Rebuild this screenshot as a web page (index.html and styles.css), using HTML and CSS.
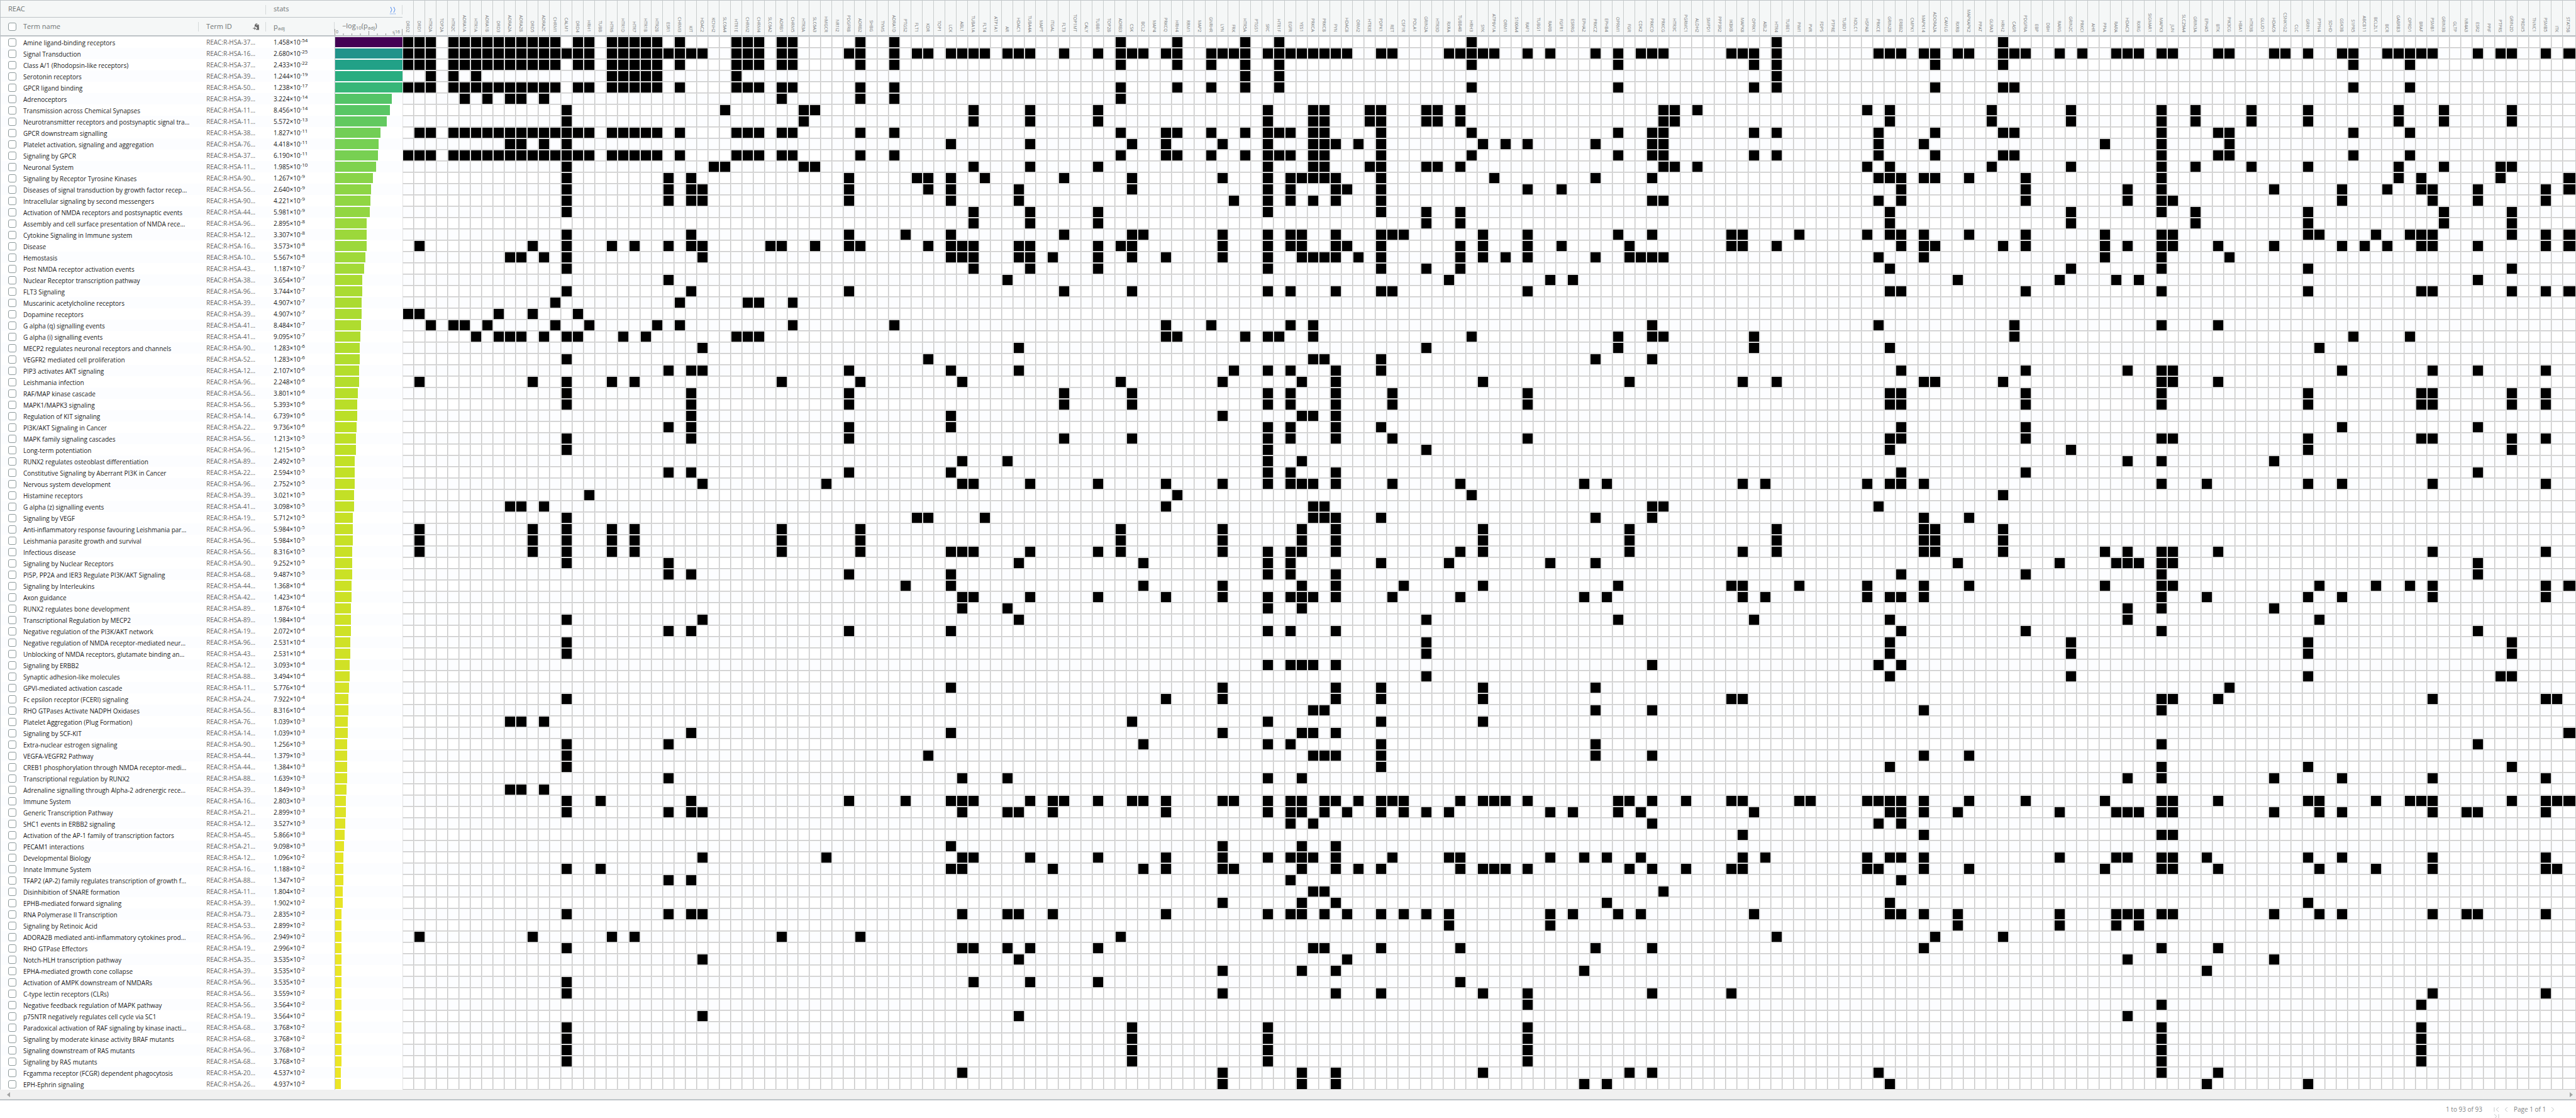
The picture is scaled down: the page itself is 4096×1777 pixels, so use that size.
FILE: index.html
```html
<!DOCTYPE html>
<html lang="en">
<head>
<meta charset="utf-8">
<title>REAC enrichment results</title>
<link rel="stylesheet" href="styles.css">
</head>
<body>
<main class="page">
  <section class="grid">
    <table class="results">
      <colgroup id="cols">
        <col class="col-name"><col class="col-id"><col class="col-p"><col class="col-bar">
      </colgroup>
      <thead>
        <tr class="head-groups" id="genes">
          <th class="group" colspan="2">REAC</th>
          <th class="group" colspan="2">
            <div class="group-row">stats
              <a class="expand" href="#" title="Expand"><svg width="10" height="13" viewBox="0 0 10 13"><path d="M1 1l2 4.500-2 4.500M6 1l2 4.500-2 4.500" fill="none" stroke="#4a86ee"/><path d="M0 12h10" stroke="#4a86ee" stroke-dasharray="1 1"/></svg></a>
            </div>
          </th>
        </tr>
        <tr class="head-cols">
          <th class="head"><label class="term"><input type="checkbox" class="tick" aria-label="Select all"><span>Term name</span></label></th>
          <th class="head">
            <div class="id-head">Term ID
              <button class="copy" type="button" title="Copy IDs"><svg width="11" height="11" viewBox="0 0 22 22"><path d="M9 1h5l1 3h4l1 17H11l-1-3c5 0 5-5 1-6L9 10 6 12V4h2z" fill="#666"/><path d="M10 5h6" stroke="#f5f7f7" stroke-width="1.500"/><path d="M0 15h5v-4l5 6-5 4v-4H0z" fill="#666"/></svg></button>
            </div>
          </th>
          <th class="head">p<sub>adj</sub></th>
          <th class="head bar-head">
            <div class="bar-title">−log<sub>10</sub>(p<sub>adj</sub>)</div>
            <div class="bar-ends"><span>0</span><span>≤16</span></div>
            <svg class="axis" width="108" height="10" viewBox="0 0 108 10"><path d="M0.500 0v10M14 7v3M27.500 7v3M41 7v3M54.500 3v7M68 7v3M81.500 7v3M95 7v3M107.500 0v10" stroke="#999" fill="none"/></svg>
          </th>
        </tr>
      </thead>
      <tbody id="rows"></tbody>
    </table>
    <div class="scrollbar">
      <svg width="5" height="8" viewBox="0 0 5 8"><path d="M5 0v8L0 4z" fill="#a3a3a3"/></svg>
      <svg width="5" height="8" viewBox="0 0 5 8"><path d="M0 0v8l5-4z" fill="#a3a3a3"/></svg>
    </div>
  </section>
  <footer class="paging">
    <span class="count">1 to 93 of 93</span>
    <nav class="pager">
      <button type="button" title="First page"><svg width="9" height="9" viewBox="0 0 9 9"><path d="M1 1v7M8 1L4 4.500 8 8"/></svg></button>
      <button type="button" title="Previous page"><svg width="9" height="9" viewBox="0 0 9 9"><path d="M6 1L2 4.500 6 8"/></svg></button>
      <span class="page-no">Page 1 of 1</span>
      <button type="button" title="Next page"><svg width="9" height="9" viewBox="0 0 9 9"><path d="M2 1l4 3.500L2 8"/></svg></button>
      <button type="button" title="Last page"><svg width="9" height="9" viewBox="0 0 9 9"><path d="M8 1v7M1 1l4 3.500L1 8"/></svg></button>
    </nav>
  </footer>
</main>
<script src="data.js"></script>
</body>
</html>
```
FILE: styles.css
```css
* { box-sizing: border-box; }

body {
  margin: 0;
  background: #fff;
  color: #1a1a1a;
  font: 10px/14px "Open Sans", "Noto Sans", sans-serif;
}

.page {
  height: 100vh;
  overflow: hidden;
}

.grid { border-bottom: 2px solid #bdc3c7; }

.results {
  width: 100%;
  table-layout: fixed;
  border-collapse: separate;
  border-spacing: 0;
}

.col-name { width: 316px; }
.col-id { width: 107px; }
.col-p { width: 109px; }
.col-bar { width: 108px; }

th {
  position: relative;
  padding: 0 0 0 12px;
  background: #f5f7f7;
  color: #6f7474;
  font-size: 11px;
  font-weight: 400;
  text-align: left;
  white-space: nowrap;
  vertical-align: middle;
}

.head-groups { height: 28px; }
.head-cols { height: 30px; }

.group {
  border-top: 1px solid #bdc3c7;
  border-bottom: 1px solid #bdc3c7;
}
.group:first-child { border-left: 1px solid #bdc3c7; }

.head { border-bottom: 2px solid #bdc3c7; }
.head:first-child { border-left: 1px solid #bdc3c7; }

/* short divider at the right side of a header cell */
.group::after, .head::after {
  content: "";
  position: absolute;
  right: 0;
  top: 7px;
  height: 15px;
  border-right: 1px solid #d5d9da;
}
.bar-head::after { display: none; }

.group-row, .id-head {
  display: flex;
  align-items: center;
  justify-content: space-between;
  padding-right: 10px;
}

.expand { display: flex; padding-top: 4px; }

button {
  display: flex;
  padding: 0;
  border: 0;
  background: none;
}

sub, sup { font-size: 8px; line-height: 0; }
sup { vertical-align: 4px; }
sub { vertical-align: -2px; }

.bar-title { padding-bottom: 2px; }
.bar-ends {
  position: absolute;
  left: 2px;
  right: 4px;
  bottom: 1px;
  display: flex;
  justify-content: space-between;
  font-size: 7px;
  line-height: 8px;
}
.axis { position: absolute; left: 0; bottom: 0; }

/* gene symbols run downwards and end just above the cells */
.gene {
  padding: 0 0 5px;
  border-top: 1px solid #bdc3c7;
  border-right: 1px solid #c8cccc;
  border-bottom: 2px solid #bdc3c7;
  font-size: 7px;
  vertical-align: bottom;
}
.gene span {
  display: block;
  width: 16px;
  writing-mode: vertical-rl;
  line-height: 16px;
}

tbody tr { height: 18px; }
tbody tr:nth-child(even) { background: #fcfdff; }

td {
  padding: 0;
  border: 1px solid;
  border-color: #e4e4e4 #c8c8c8 #c8c8c8 #e4e4e4;
}

.name, .id, .p, .bar {
  height: 18px;
  border: 0;
  padding-left: 12px;
  line-height: 18px;
  white-space: nowrap;
}
.name { border-left: 1px solid #bdc3c7; }
.id { color: #666; }

.term { display: flex; align-items: center; gap: 11px; }
.name .term { height: 18px; }
.name span { padding-top: 3px; line-height: 15px; }

.tick {
  appearance: none;
  flex: none;
  width: 13px;
  height: 13px;
  margin: 0;
  border: 1px solid #8e9a9b;
  border-radius: 3px;
  background: #fff;
}

.bar { padding: 1px 0; border-left: 1px solid #bdc3c7; }
.bar div { height: 16px; }

.on { background: #000; }

.scrollbar {
  display: flex;
  align-items: center;
  justify-content: space-between;
  height: 15px;
  padding: 0 5px 0 11px;
  background: #f0f0f0;
}

.paging {
  display: flex;
  justify-content: flex-end;
  align-items: flex-start;
  gap: 18px;
  padding: 7px 20px 0 0;
  color: #7f8485;
}
.pager {
  display: flex;
  flex-wrap: wrap;
  align-items: center;
  column-gap: 7px;
  width: 111px;
}
.pager svg { fill: none; stroke: #c3c8c9; }
```
FILE: data.js
```js
// Gene symbols, in three blocks of 64 columns.
const genes = [
  "DRD2 DRD1 HTR2A TOP2A HTR2C ADRA1A HTR1A ADRA1B DRD3 ADRA2A ADRA2B DRD5 ADRA2C CHRM1 CALM1 DRD4 HRH1 TUBB HTR6 HTR1D HTR7 HTR1B HTR2B ESR1 CHRM3 KIT HDAC2 KCNH2 SLC6A4 HTR1E CHRM2 CHRM4 SLC6A2 ADRB1 CHRM5 HTR3A SLC6A3 HMGCR NR1I2 PDGFRB ADRB2 SHBG TYMS ADRA1D PTGS2 FLT1 KDR TOP1 LCK ABL1 TUBA1A FLT4 ATP1A1 AR HDAC1 TUBA4A MAPT ITGAL FLT3 TOP1MT CALY TUBB1 TOP2B ADRB3",
  "CSK BCL2 MAP4 PRKCQ HRH4 RRM1 MAP2 GNRHR LYN FRK HTR5A PTGS1 SRC HTR1F EGFR YES1 PRKCA PRKCB FYN HDAC8 ORM2 HTR3E PDPK1 RET CSF1R POLA1 GRIN2A HTR3D RXRA TUBB4B HRH3 SYK ATP6V1A ORM1 S100A4 RAF1 TUBG1 RARB FGFR1 ESRRG EPHA2 PRKCZ EPHB4 OPRM1 FGR CDK2 PRKCD PRKCG HTR3C PGRMC1 ALDH2 SMPD1 PPP3R2 IKBKB MAPK8 OPRK1 ABL2 HTR4 TUBE1 PIM1 PVR FDPS PTPRE TUBD1",
  "NOLC1 HSPA8 PRKCE GRIN2B ERBB2 CMPK1 MAPK14 ADORA2A CAMLG RXRB MAPKAPK2 PPAT GLRA3 HRH2 CASR PDGFRA EBP DBH RARG GRIN2C PRKCI AHR PPIA RARA HDAC3 RXRG SIGMAR1 MAPK3 JUN SLC29A4 GRIN3A EPHA5 BTK PIK3CG HBA1 HTR3B GLUD1 HDAC6 CSNK1G2 CLC GRIN1 PTPN4 SDHD GSK3B S1PR5 ABCB11 BCL2L1 BCR GABRB3 OPRD1 BRAF PSMB1 GRIN3B GLTP NR4A3 ESR2 PPIF PTPRS GRIN2D PRDX5 TNNC1 PSMB5 ITK STAT5B"
].join(" ").split(" ");

// name | id | p | members in block 1 | block 2 | block 3
const terms = `Amine ligand-binding receptors|37|1.458e-54|0-2,4-13,15-16,18-22,24,29-31,33-34,40,43,63|4,10,13,30,57|13
Signal Transduction|16|2.680e-25|0-2,4-16,18-26,29-31,33-34,39-40,43,45-46,48-51,53-55,58,61,63|0-1,3-4,7-10,12-19,22-23,28-32,35,37,41,43,45-47,53-55,57|2-4,6-7,9-10,13-15,18,20,23-25,27-28,32-33,37-38,40,43-44,47-51,55,57-58,61,63
Class A/1 (Rhodopsin-like receptors)|37|2.433e-22|0-2,4-13,15-16,18-22,24,29-31,33-34,40,43,63|4,7,10,13,30,43,55,57|7,13,44,49
Serotonin receptors|39|1.244e-19|2,4,6,18-22,29|10,13,57|
GPCR ligand binding|50|1.238e-17|0-2,4-13,15-16,18-22,24,29-31,33-34,40,43,63|4,7,10,13,30,43,55,57|7,13-14,44,49
Adrenoceptors|39|3.224e-14|5,7,9-10,12,33,40,43,63||
Transmission across Chemical Synapses|11|8.456e-14|14,28,35-36,50,55,61|12,16-17,21-22,26-27,29,47-48,50|1,3,12,19,27,30,35,40,48,52,58
Neurotransmitter receptors and postsynaptic signal tra…|11|5.572e-13|14,35,50,55,61|12,16-17,21-22,26-27,29,47-48|3,12,19,27,30,35,40,48,52,58
GPCR downstream signalling|38|1.827e-11|1-2,4-16,18-22,24,29-31,33-34,40,43,63|3-4,7,10,12-14,16-17,22,30,43,46-47,55,57|2,7,13-14,27,32-33,44,49
Platelet activation, signaling and aggregation|76|4.418e-11|9-10,12,14,48,55|0,3,8,12,16-18,20,22,31,33,35,41,46-47|2,6,22,27,33
Signaling by GPCR|37|6.190e-11|0-2,4-16,18-22,24,29-31,33-34,40,43,63|3-4,7,10,12-14,16-17,22,30,43,46-47,55,57|2,7,13-14,27,32-33,44,49
Neuronal System|11|1.985e-10|14,27-28,35-36,50,55,61|12,16-17,21-22,26-27,29,47-48,50|1,3,12,19,27,30,35,40,48,52,57-58
Signaling by Receptor Tyrosine Kinases|90|1.267e-9|14,23,25,39,45-46,48,51,58|0,8,12,14-18,22,32,41,46|2-4,6-7,10,15,27,48,50,57,63
Diseases of signal transduction by growth factor recep…|56|2.640e-9|14,23,25-26,39,46,48,54|0,12,14,18-19,22,35,38|4,15,24,27,37,43,47,50-51,55,61,63
Intracellular signaling by second messengers|90|4.221e-9|14,23,25-26,39,48,54|9,12,14,16,18,22,46-47|2,4,15,24,27-28,43,51,55,61
Activation of NMDA receptors and postsynaptic events|44|5.981e-9|14,50,55,61|12,22,26,29|3,19,27,30,40,52,58
Assembly and cell surface presentation of NMDA rece…|96|2.895e-8|50,55,61|26,29|3,19,30,40,52,58
Cytokine Signaling in Immune system|12|3.307e-8|14,25,39,44,48,58|0-1,8,12,14-15,18,22-24,31,35,43,46,53-54,59|1,3-4,6,10,15,22,27-28,40-41,46,49-51,58,61,63
Disease|16|3.573e-8|1,11,14,18,20,23,25-26,32-33,36,39-40,46,48-50,54-55,61,63|0,8,12,14-15,18-19,22,29,31,35,38,44,53-54,57|4,6-7,13,15,22,24,27-28,32,37,43,45,47,50-51,55,61,63
Hemostasis|10|5.567e-8|9-10,12,14,26,48-50,54-55,57,61|0,3,8,12,15-18,20,22,29,31,33,35,41,44-47|2,6,22,27,33
Post NMDA receptor activation events|43|1.187e-7|14,50,55,61|12,22,26,29|3,19,27,40,58
Nuclear Receptor transcription pathway|38|3.654e-7|23,53|28,37,39|9,18,23,25,55
FLT3 Signaling|96|3.744e-7|14,25,39,58|0,12,14,18,22-23,35|3-4,15,27,40,50-51,58,61,63
Muscarinic acetylcholine receptors|39|4.907e-7|13,24,30-31,34||
Dopamine receptors|39|4.907e-7|0-1,8,11,15||
G alpha (q) signalling events|41|8.484e-7|2,4-5,7,13,16,22,24,34,43|3,7,14,16,46|2,14,27,32
G alpha (i) signalling events|41|9.095e-7|6,8-10,12,14-15,19,21,29-31|3-4,10,12-13,16,30,43,46-47,55|14,44,49
MECP2 regulates neuronal receptors and channels|90|1.283e-6|26,54|26,43,55|3,41
VEGFR2 mediated cell proliferation|52|1.283e-6|14,46|16-17,22,41,46|
PIP3 activates AKT signaling|12|2.107e-6|23,25-26,39,48,54|9,12,14,18,22|4,15,24,27-28,43,51,55,61
Leishmania infection|96|2.248e-6|1,11,14,18,20,33,40,49,63|8,15,18,31,44,54,57|6-7,13,27-28,32
RAF/MAP kinase cascade|56|3.801e-6|14,25,39,58|0,12,14,18,23,35|3-4,15,27,40,50-51,58,61
MAPK1/MAPK3 signaling|56|5.393e-6|14,25,39,58|0,12,14,18,23,35|3-4,15,27,40,50-51,58,61
Regulation of KIT signaling|14|6.739e-6|25,48|8,15-16,18|
PI3K/AKT Signaling in Cancer|22|9.736e-6|23,25,39,48|12,14,18,22|4,15,43,55
MAPK family signaling cascades|56|1.213e-5|14,25,39,58|0,12,14,18,23,35|3-4,15,27-28,40,50-51,58,61
Long-term potentiation|96|1.215e-5|14|12,26|3,19,40,58
RUNX2 regulates osteoblast differentiation|89|2.492e-5|49,53|12,15|24,27,37
Constitutive Signaling by Aberrant PI3K in Cancer|22|2.594e-5|23,25,39,48|12,14,18|4,15,55
Nervous system development|96|2.752e-5|26,37,49-50,55,61|3,8,12,14-16,18,23,29,40,42,54,56|1,3-4,6,27,31,40,43,51,61
Histamine receptors|39|3.021e-5|16|4,30|13
G alpha (z) signalling events|41|3.098e-5|9-10,12|3,16-17,46-47|2
Signaling by VEGF|19|5.712e-5|14,45-46,51|16-18,22,41,46|6,10
Anti-inflammatory response favouring Leishmania par…|96|5.984e-5|1,11,14,18,20,33,40,63|8,15,18,31,44,57|6-7,13
Leishmania parasite growth and survival|96|5.984e-5|1,11,14,18,20,33,40,63|8,15,18,31,44,57|6-7,13
Infectious disease|56|8.316e-5|1,11,14,18,20,33,40,48-50,55,61,63|8,12,14-15,18,29,31,44,54,57|6-7,13,22,24,27-28,32,51,61
Signaling by Nuclear Receptors|90|9.252e-5|14,23,54|1,12,14,22,28,37,41|9,18,23-25,27-28,55
PI5P, PP2A and IER3 Regulate PI3K/AKT Signaling|68|9.487e-5|23,25,39,48|12,14,18|4,15,27,55
Signaling by Interleukins|44|1.368e-4|44,48|1,8,15,18,24,31,43,53-54,59|1,6,10,22,27-28,41,46,49,51,61,63
Axon guidance|42|1.423e-4|49-50,55,61|3,8,12,14-16,18,23,29,40,42,54,56|1,3-4,6,27,31,40,43,51,61
RUNX2 regulates bone development|89|1.876e-4|49,53|12,15|24,27,37
Transcriptional Regulation by MECP2|89|1.984e-4|14,26,54|26,43,55|3,24,41
Negative regulation of the PI3K/AKT network|19|2.072e-4|23,25,39,48|12,14,18|4,15,27,55
Negative regulation of NMDA receptor-mediated neur…|96|2.531e-4|14|26|3,19,40,58
Unblocking of NMDA receptors, glutamate binding an…|43|2.531e-4|14|26|3,19,40,58
Signaling by ERBB2|12|3.093e-4||12,14-16,18,46|2,4
Synaptic adhesion-like molecules|88|3.494e-4||26|3,19,40,57-58
GPVI-mediated activation cascade|11|5.776e-4|48|8,18,22,31,41|33
Fc epsilon receptor (FCERI) signaling|24|7.922e-4|14|3,8,18,22,31,53-54|27-28,32,51,61-62
RHO GTPases Activate NADPH Oxidases|56|8.316e-4||16-17,41,46|6,27
Platelet Aggregation (Plug Formation)|76|1.039e-3|9-10,12|0,12,22,31|
Signaling by SCF-KIT|14|1.039e-3|25,48|8,15-16,18|63
Extra-nuclear estrogen signaling|90|1.256e-3|14,23|1,12,14,22,41|27,55
VEGFA-VEGFR2 Pathway|44|1.379e-3|14,46|16-18,22,41,46|6,10
CREB1 phosphorylation through NMDA receptor-medi…|44|1.384e-3|14|22|3,27,40,58
Transcriptional regulation by RUNX2|88|1.639e-3|23,49,53|12,15|24,27,37,43,51,61
Adrenaline signalling through Alpha-2 adrenergic rece…|39|1.849e-3|9-10,12||
Immune System|16|2.803e-3|14,17,25,39,44,48-50,55,57-58,61|0-1,3,8-9,12,14-15,17-18,20,22-24,29,31-33,35,43-44,46,49,53-54,59-60|1-4,6,10,15,22,27-28,32,40-41,46,49-51,58,61-63
Generic Transcription Pathway|21|2.899e-3|14,23,25-26,49,53-54,57|3,12,14-15,17,19,22,24,26,28,37,39,43,45,55|3-4,6,9,18,23-25,27-28,37,41,43,51,54-55,61
SHC1 events in ERBB2 signaling|12|3.527e-3||14,16,46|2,4
Activation of the AP-1 family of transcription factors|45|5.866e-3||54|6,27-28
PECAM1 interactions|21|9.098e-3|48|8,15,18|
Developmental Biology|12|1.096e-2|26,37,49-50,55,61|3,8,12,14-16,18,23,28-29,37,40,42,45,54,56|1,3-4,6,18,23-24,27-28,31,40,43,51,61
Innate Immune System|16|1.188e-2|14,17,48-49,57|1,3,8-9,15,18,20,22,29,31-33,35,44,46,49,53-54|1-2,6,10,22,27-28,32,41,46,51,61-62
TFAP2 (AP-2) family regulates transcription of growth f…|88|1.347e-2|23,25|14|4
Disinhibition of SNARE formation|11|1.804e-2||16-17,47|
EPHB-mediated forward signaling|39|1.902e-2||8,15,18,42|3,40
RNA Polymerase II Transcription|73|2.835e-2|14,23,25-26,49,53-54,57|3,12,14-15,17,19,22,24,26,28,37,39,43,45,55|3-4,6,9,18,23-25,27-28,37,41,43,51,54-55,61
Signaling by Retinoic Acid|53|2.899e-2||28,37|9,18,23,25
ADORA2B mediated anti-inflammatory cytokines prod…|96|2.949e-2|1,11,18,20,33,40,63|57|7,13
RHO GTPase Effectors|19|2.996e-2|14,49-50,53,55,61|16-17,22,29,41,46|6,27,32
Notch-HLH transcription pathway|35|3.535e-2|26,54|19|24,37
EPHA-mediated growth cone collapse|39|3.535e-2||8,15,18,40|31
Activation of AMPK downstream of NMDARs|96|3.535e-2|14,50,55,61|29|
C-type lectin receptors (CLRs)|56|3.559e-2|14|8,18,22,31,35,46,53|51,61
Negative feedback regulation of MAPK pathway|56|3.564e-2||35|27,50
p75NTR negatively regulates cell cycle via SC1|19|3.564e-2|26,54||24
Paradoxical activation of RAF signaling by kinase inacti…|68|3.768e-2|14|0,12,35|27,50
Signaling by moderate kinase activity BRAF mutants|68|3.768e-2|14|0,12,35|27,50
Signaling downstream of RAS mutants|96|3.768e-2|14|0,12,35|27,50
Signaling by RAS mutants|68|3.768e-2|14|0,12,35|27,50
Fcgamma receptor (FCGR) dependent phagocytosis|20|4.537e-2|49|8,15,18,31,44,46|2,27,32
EPH-Ephrin signaling|26|4.937e-2||8,15,18,40,42|3,31,40`.split("\n");

const viridis = ["440154", "482475", "414487", "355f8d", "2a788e", "21918c", "22a884", "44bf70", "7ad151", "bddf26", "fde725"]
  .map(h => [0, 2, 4].map(i => parseInt(h.slice(i, i + 2), 16)));

function colour(score) {
  const t = Math.max(0, 1 - score / 50) * 10;
  const i = Math.min(9, Math.floor(t));
  return "rgb(" + viridis[i].map((v, k) => Math.round(v + (viridis[i + 1][k] - v) * (t - i))).join(",") + ")";
}

function members(blocks) {
  const set = new Set();
  blocks.forEach((block, b) => {
    if (!block) return;
    block.split(",").forEach(part => {
      const [from, to = from] = part.split("-").map(Number);
      for (let c = from; c <= to; c++) set.add(b * 64 + c);
    });
  });
  return set;
}

document.getElementById("cols").insertAdjacentHTML("beforeend", "<col>".repeat(genes.length));
document.getElementById("genes").insertAdjacentHTML("beforeend",
  genes.map(g => `<th class="gene" rowspan="2"><span>${g}</span></th>`).join(""));

document.getElementById("rows").innerHTML = terms.map(line => {
  const [name, id, p, ...blocks] = line.split("|");
  const [mantissa, exponent] = p.split("e");
  const score = -Math.log10(Number(p));
  const width = Math.min(100, score / 16 * 100).toFixed(1);
  const on = members(blocks);
  return `<tr><td class="name"><label class="term"><input type="checkbox" class="tick"><span>${name}</span></label></td>` +
    `<td class="id">REAC:R-HSA-${id}…</td><td class="p">${mantissa}×10<sup>${exponent}</sup></td>` +
    `<td class="bar"><div style="width:${width}%;background:${colour(score)}"></div></td>` +
    genes.map((g, c) => on.has(c) ? '<td class="on"></td>' : "<td></td>").join("") + "</tr>";
}).join("");
```
